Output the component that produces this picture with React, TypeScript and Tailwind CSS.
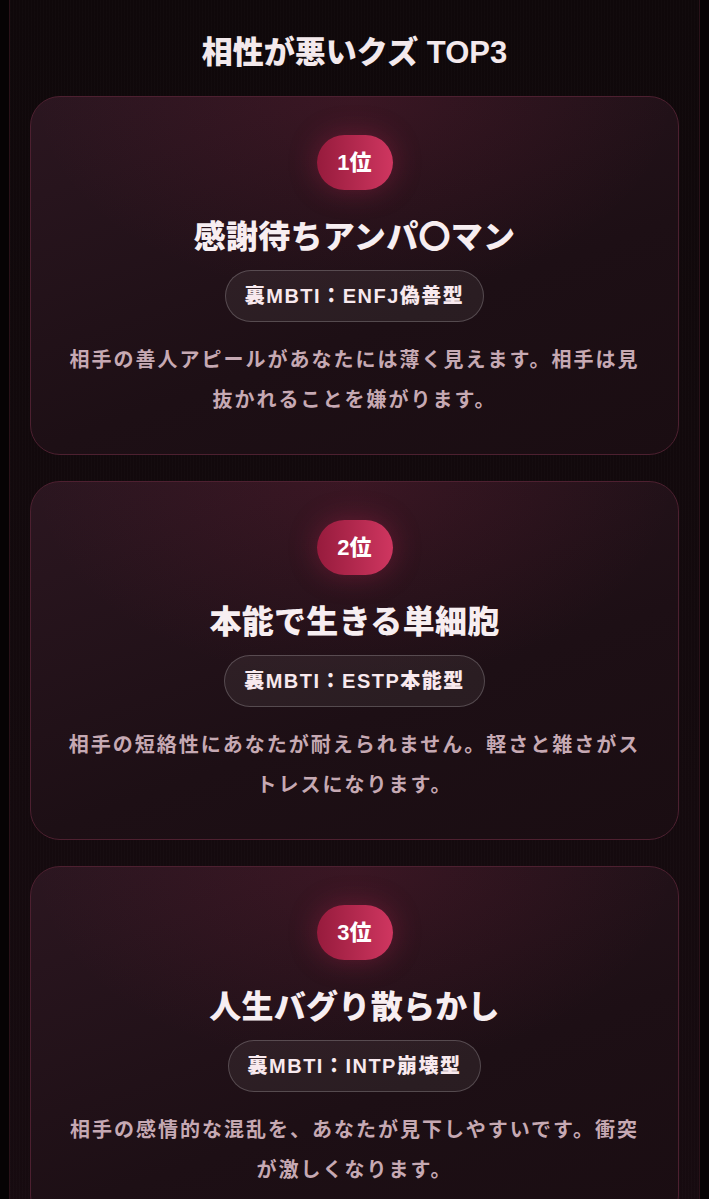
import React from "react";

type Rank = {
  rank: number;
  name: string;
  type: string;
  desc: string;
};

const ranks: Rank[] = [
  {
    rank: 1,
    name: "感謝待ちアンパ〇マン",
    type: "裏MBTI：ENFJ偽善型",
    desc: "相手の善人アピールがあなたには薄く見えます。相手は見抜かれることを嫌がります。",
  },
  {
    rank: 2,
    name: "本能で生きる単細胞",
    type: "裏MBTI：ESTP本能型",
    desc: "相手の短絡性にあなたが耐えられません。軽さと雑さがストレスになります。",
  },
  {
    rank: 3,
    name: "人生バグり散らかし",
    type: "裏MBTI：INTP崩壊型",
    desc: "相手の感情的な混乱を、あなたが見下しやすいです。衝突が激しくなります。",
  },
];

const RankCard: React.FC<{ item: Rank }> = ({ item }) => (
  <div className="rounded-[30px] border border-[#4d2030] bg-[radial-gradient(ellipse_320px_200px_at_50%_0%,rgba(200,40,85,0.12),transparent),linear-gradient(160deg,#2b1620,#1d0f15_60%,#1a0d12)] pt-[38px] pb-[34px] flex flex-col items-center">
    {/* rank badge */}
    <div className="w-[76px] h-[55px] rounded-full bg-gradient-to-r from-[#971b3d] to-[#cf3660] shadow-[0_0_28px_rgba(200,40,85,0.35)] flex items-center justify-center">
      <span className="text-white text-[22px] font-black">{item.rank}位</span>
    </div>

    <h3 className="mt-[23px] text-[32px] leading-[48px] font-black tracking-[0.3px] text-[#f7eef1]">
      {item.name}
    </h3>

    <div className="mt-[9px] h-[52px] px-[19px] rounded-full border border-white/20 bg-white/[0.06] flex items-center">
      <span className="text-[20px] font-black tracking-[1.5px] text-[#f8e9ee]">{item.type}</span>
    </div>

    <p className="mt-[18px] px-[36px] text-center text-[20px] leading-[40px] font-bold tracking-[2px] text-[#c6a9b3]">
      {item.desc}
    </p>
  </div>
);

export default function App() {
  return (
    <div className="min-h-screen bg-[#060304] font-['Liberation_Sans','Noto_Sans_CJK_JP',sans-serif]">
      <div className="mx-[9px] min-h-screen border-x border-[#2a1219] bg-[repeating-linear-gradient(90deg,rgba(255,255,255,0.012)_0_1px,transparent_1px_3px),linear-gradient(180deg,#0f080a,#170b10)] px-[20px] pb-10">
        <h2 className="pt-[34px] h-[96px] text-center text-[31px] leading-[38px] font-black text-[#f3e9ec]">
          相性が悪いクズ TOP3
        </h2>

        <div className="flex flex-col gap-[26px]">
          {ranks.map((r) => (
            <RankCard key={r.rank} item={r} />
          ))}
        </div>
      </div>
    </div>
  );
}
